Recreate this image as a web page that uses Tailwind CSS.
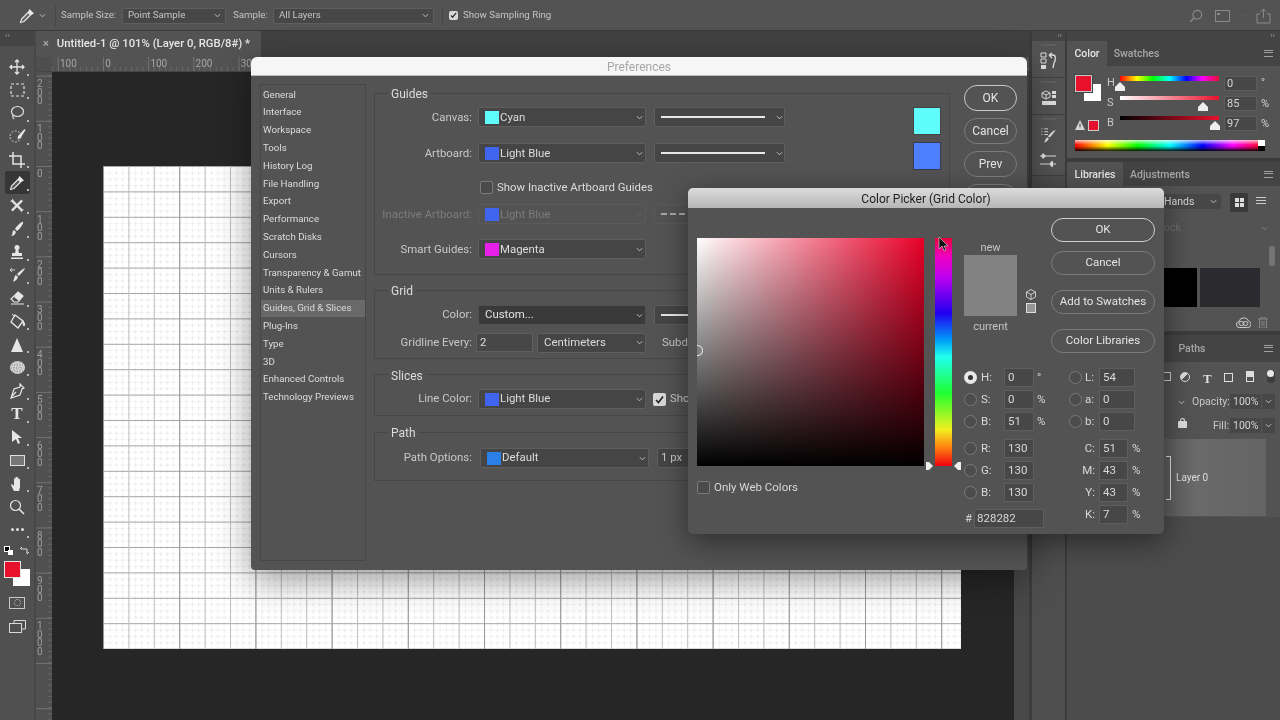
<!DOCTYPE html>
<html lang="en">
<head>
<meta charset="utf-8">
<title>Preferences</title>
<script src="https://cdn.jsdelivr.net/npm/@tailwindcss/browser@4"></script>
</head>
<body class="m-0 overflow-hidden bg-[#535353]">
<div class="relative w-[1280px] h-[720px] overflow-hidden flex flex-col bg-[#535353] text-[#d4d4d4] text-[11px] blur-[0.35px] font-[family-name:Roboto,sans-serif]">

  <!-- options bar -->
  <div class="h-[31px] shrink-0 flex items-center pt-[1px] bg-[#535353] border-b border-[#3a3a3a] text-[#c4c4c4] text-[9.7px]">
    <svg class="ml-[19px] w-[16px] h-[16px]" viewBox="0 0 16 16"><path d="M10.500 1l4.500 4.500-2 1-1.500 1.500-3.500-3.500 1.500-1.500z" fill="#e8e8e8"/><path d="M8.500 5L2.500 11 1.500 14.500 5 13.500l6-6" fill="#6a6a6a" stroke="#e8e8e8" stroke-width="1.100"/></svg>
    <svg class="ml-[4px] w-[7px] h-[5px]" viewBox="0 0 8 5"><path d="M1 1l3 3 3-3" stroke="#ccc" fill="none"/></svg>
    <div class="ml-[9px] w-px h-[20px] bg-[#464646]"></div>
    <span class="ml-[5px] w-[61px]">Sample Size:</span>
    <div class="w-[104px] h-[16px] flex items-center justify-between pl-[5px] pr-[4px] bg-[#474747] border border-[#5e5e5e] rounded-[2px]"><span>Point Sample</span><svg class="w-[7px] h-[5px]" viewBox="0 0 8 5"><path d="M1 1l3 3 3-3" stroke="#ccc" fill="none"/></svg></div>
    <span class="ml-[7px] w-[40px]">Sample:</span>
    <div class="w-[161px] h-[16px] flex items-center justify-between pl-[5px] pr-[4px] bg-[#474747] border border-[#5e5e5e] rounded-[2px]"><span>All Layers</span><svg class="w-[7px] h-[5px]" viewBox="0 0 8 5"><path d="M1 1l3 3 3-3" stroke="#ccc" fill="none"/></svg></div>
    <div class="ml-[8px] w-px h-[20px] bg-[#464646]"></div>
    <div class="ml-[6px] w-[9px] h-[9px] rounded-[2px] bg-[#d8d8d8] flex items-center justify-center"><svg class="w-[7px] h-[7px]" viewBox="0 0 8 8"><path d="M1 4l2 2 4-5" stroke="#333" stroke-width="1.500" fill="none"/></svg></div>
    <span class="ml-[5px]">Show Sampling Ring</span>
    <div class="ml-auto flex items-center">
      <svg class="w-[14px] h-[14px]" viewBox="0 0 16 16"><circle cx="9.500" cy="6.500" r="5" fill="none" stroke="#8a8a8a" stroke-width="1.300"/><path d="M6 10l-4.500 4.500" stroke="#8a8a8a" stroke-width="1.600"/></svg>
      <svg class="ml-[12px] w-[15px] h-[12px]" viewBox="0 0 15 12"><rect x=".5" y=".5" width="14" height="11" fill="none" stroke="#8a8a8a"/><rect x="2" y="3" width="3" height="2" fill="#8a8a8a"/></svg>
      <svg class="ml-[9px] w-[7px] h-[5px]" viewBox="0 0 8 5"><path d="M1 1l3 3 3-3" stroke="#646464" fill="none"/></svg>
      <svg class="ml-[10px] mr-[9px] w-[15px] h-[16px]" viewBox="0 0 15 16"><path d="M4 6H1v9h13V6h-3M7.500 10V1M4.500 4l3-3 3 3" fill="none" stroke="#8a8a8a"/></svg>
    </div>
  </div>

  <div class="flex-1 flex min-h-0">
    <!-- tools -->
    <div class="w-[34px] shrink-0 flex flex-col bg-[#505050]">
      <div class="h-[15px] shrink-0 bg-[#444] text-[8px] leading-[10px] pl-[5px] text-[#999]">››</div>
      <div class="h-[9.5px] shrink-0"></div>
      <div class="flex flex-col">
        <div class="relative h-[23.15px] flex items-center justify-center"><svg class="w-[16px] h-[16px]" viewBox="0 0 16 16"><path d="M8 1v14M1 8h14M6 3l2-2 2 2M6 13l2 2 2-2M3 6L1 8l2 2M13 6l2 2-2 2" fill="none" stroke="#e2e2e2" stroke-width="1.300"/></svg><i class="absolute left-[27px] bottom-[3px] w-[2px] h-[2px] bg-[#bbb]"></i></div>
        <div class="relative h-[23.15px] flex items-center justify-center"><svg class="w-[15px] h-[14px]" viewBox="0 0 15 14"><rect x="1" y="1" width="13" height="12" fill="none" stroke="#e2e2e2" stroke-width="1.200" stroke-dasharray="3 2"/></svg><i class="absolute left-[27px] bottom-[3px] w-[2px] h-[2px] bg-[#bbb]"></i></div>
        <div class="relative h-[23.15px] flex items-center justify-center"><svg class="w-[16px] h-[16px]" viewBox="0 0 16 16"><ellipse cx="8.500" cy="6.500" rx="6" ry="5" fill="none" stroke="#e2e2e2" stroke-width="1.200"/><path d="M4 10c-1 2 0 3 1 4" fill="none" stroke="#e2e2e2" stroke-width="1.200"/></svg><i class="absolute left-[27px] bottom-[3px] w-[2px] h-[2px] bg-[#bbb]"></i></div>
        <div class="relative h-[23.15px] flex items-center justify-center"><svg class="w-[17px] h-[16px]" viewBox="0 0 17 16"><circle cx="6.500" cy="8.500" r="5.500" fill="none" stroke="#d0d0d0" stroke-dasharray="2 1.500"/><path d="M15.500 1l1 1-5 8-3 1.500L9 8z" fill="#e8e8e8"/></svg><i class="absolute left-[27px] bottom-[3px] w-[2px] h-[2px] bg-[#bbb]"></i></div>
        <div class="relative h-[23.15px] flex items-center justify-center"><svg class="w-[16px] h-[16px]" viewBox="0 0 16 16"><path d="M4 0v12h12M0 4h12v12" fill="none" stroke="#e2e2e2" stroke-width="1.500"/></svg><i class="absolute left-[27px] bottom-[3px] w-[2px] h-[2px] bg-[#bbb]"></i></div>
        <div class="relative h-[23.15px] flex items-center justify-center"><div class="w-[25px] h-[23px] flex items-center justify-center rounded-[2px] bg-[#363636]"><svg class="w-[16px] h-[16px]" viewBox="0 0 16 16"><path d="M10.500 1l4.500 4.500-2 1-1.500 1.500-3.500-3.500 1.500-1.500z" fill="#e8e8e8"/><path d="M8.500 5L2.500 11 1.500 14.500 5 13.500l6-6" fill="#5a5a5a" stroke="#e8e8e8" stroke-width="1.100"/></svg></div><i class="absolute left-[27px] bottom-[3px] w-[2px] h-[2px] bg-[#bbb]"></i></div>
        <div class="relative h-[23.15px] flex items-center justify-center"><svg class="w-[16px] h-[15px]" viewBox="0 0 16 16"><path d="M2.500 2.500l11 11M13.500 2.500l-11 11" stroke="#e2e2e2" stroke-width="2.400"/><path d="M1 4l3-3M12 15l3-3" stroke="#e2e2e2"/></svg><i class="absolute left-[27px] bottom-[3px] w-[2px] h-[2px] bg-[#bbb]"></i></div>
        <div class="relative h-[23.15px] flex items-center justify-center"><svg class="w-[16px] h-[16px]" viewBox="0 0 16 16"><path d="M14 1c1 1-3 7-6 9l-2-2c2-3 7-8 8-7zM5 9l2 2c-1 3-3 4-5 4 2-1 1-5 3-6z" fill="#e6e6e6"/></svg><i class="absolute left-[27px] bottom-[3px] w-[2px] h-[2px] bg-[#bbb]"></i></div>
        <div class="relative h-[23.15px] flex items-center justify-center"><svg class="w-[16px] h-[16px]" viewBox="0 0 16 16"><circle cx="8" cy="3.500" r="2.500" fill="#e6e6e6"/><path d="M7 5h2l1 4h3v3H3V9h3zM2 13.500h12V15H2z" fill="#e6e6e6"/></svg><i class="absolute left-[27px] bottom-[3px] w-[2px] h-[2px] bg-[#bbb]"></i></div>
        <div class="relative h-[23.15px] flex items-center justify-center"><svg class="w-[17px] h-[16px]" viewBox="0 0 17 16"><path d="M16 1c0 1-4 6-6 8l-2-2c2-2 7-6 8-6zM7 8l2 2c-1 3-3 4-5 5 1-2 1-6 3-7z" fill="#e6e6e6"/><path d="M1 3h5M3 1L1 3l2 2" fill="none" stroke="#d0d0d0"/></svg><i class="absolute left-[27px] bottom-[3px] w-[2px] h-[2px] bg-[#bbb]"></i></div>
        <div class="relative h-[23.15px] flex items-center justify-center"><svg class="w-[16px] h-[16px]" viewBox="0 0 16 16"><path d="M9 2l5 4-5 6H5L2 9z" fill="none" stroke="#e6e6e6" stroke-width="1.200"/><path d="M9 2l5 4-4 5-5-4z" fill="#e6e6e6"/><path d="M2 14h13" stroke="#e6e6e6"/></svg><i class="absolute left-[27px] bottom-[3px] w-[2px] h-[2px] bg-[#bbb]"></i></div>
        <div class="relative h-[23.15px] flex items-center justify-center"><svg class="w-[17px] h-[17px]" viewBox="0 0 17 17"><path d="M6 2l8 6-5 7-7-6z" fill="none" stroke="#e6e6e6" stroke-width="1.300"/><path d="M14 8c2 2 2 5 1 5s-1-3-1-5zM3 1l3 3" stroke="#e6e6e6" fill="#e6e6e6"/></svg><i class="absolute left-[27px] bottom-[3px] w-[2px] h-[2px] bg-[#bbb]"></i></div>
        <div class="relative h-[23.15px] flex items-center justify-center"><svg class="w-[14px] h-[16px]" viewBox="0 0 14 16"><path d="M7 1l6 14H1z" fill="#e6e6e6"/></svg><i class="absolute left-[27px] bottom-[3px] w-[2px] h-[2px] bg-[#bbb]"></i></div>
        <div class="relative h-[23.15px] flex items-center justify-center"><svg class="w-[17px] h-[17px]" viewBox="0 0 17 17"><ellipse cx="8.500" cy="8.500" rx="7.500" ry="6.500" fill="#d4d4d4"/><path d="M3 6h11M2 9h13M3 12h11M5 3v11M8 2v13M11 3v11" stroke="#777" stroke-width=".7" stroke-dasharray="1 1.500"/></svg><i class="absolute left-[27px] bottom-[3px] w-[2px] h-[2px] bg-[#bbb]"></i></div>
        <div class="relative h-[23.15px] flex items-center justify-center"><svg class="w-[16px] h-[16px]" viewBox="0 0 16 16"><path d="M11 1l4 4-2 1-2 6-9 3 3-9 6-2zM2 14l5-5" fill="none" stroke="#e6e6e6" stroke-width="1.200"/></svg><i class="absolute left-[27px] bottom-[3px] w-[2px] h-[2px] bg-[#bbb]"></i></div>
        <div class="relative h-[23.15px] flex items-center justify-center font-[family-name:'Liberation_Serif',serif] font-bold text-[17px] text-[#e6e6e6]">T<i class="absolute left-[27px] bottom-[3px] w-[2px] h-[2px] bg-[#bbb]"></i></div>
        <div class="relative h-[23.15px] flex items-center justify-center"><svg class="w-[12px] h-[16px]" viewBox="0 0 12 16"><path d="M1 1l10 8H7l2 5-2 1-2-5-4 3z" fill="#e6e6e6"/></svg><i class="absolute left-[27px] bottom-[3px] w-[2px] h-[2px] bg-[#bbb]"></i></div>
        <div class="relative h-[23.15px] flex items-center justify-center"><div class="w-[15px] h-[11px] bg-[#777] border border-[#e0e0e0]"></div><i class="absolute left-[27px] bottom-[3px] w-[2px] h-[2px] bg-[#bbb]"></i></div>
        <div class="relative h-[23.15px] flex items-center justify-center"><svg class="w-[15px] h-[16px]" viewBox="0 0 15 16"><path d="M4 15L1 9c0-1 1-1 2 0l1 1V3c0-1 1.500-1 1.500 0v4V1.500c0-1 1.500-1 1.500 0V7V2c0-1 1.500-1 1.500 0v5V3.500c0-1 1.500-1 1.500 0V11l-1 4z" fill="#e6e6e6"/></svg><i class="absolute left-[27px] bottom-[3px] w-[2px] h-[2px] bg-[#bbb]"></i></div>
        <div class="relative h-[23.15px] flex items-center justify-center"><svg class="w-[16px] h-[16px]" viewBox="0 0 16 16"><circle cx="6.500" cy="6.500" r="5" fill="none" stroke="#e6e6e6" stroke-width="1.200"/><path d="M10 10l5 5" stroke="#e6e6e6" stroke-width="1.600"/></svg></div>
        <div class="relative h-[23.15px] flex items-center justify-center gap-[2px]"><div class="w-[3px] h-[3px] rounded-full bg-[#e0e0e0]"></div><div class="w-[3px] h-[3px] rounded-full bg-[#e0e0e0]"></div><div class="w-[3px] h-[3px] rounded-full bg-[#e0e0e0]"></div><i class="absolute left-[27px] bottom-[3px] w-[2px] h-[2px] bg-[#bbb]"></i></div>
      </div>
      <div class="ml-[4px] mt-[3.5px] h-[12px] flex items-center">
        <div class="relative w-[10px] h-[10px]"><div class="absolute left-0 top-0 w-[6px] h-[6px] bg-black border border-white"></div><div class="absolute left-[4px] top-[4px] w-[5px] h-[5px] bg-white"></div></div>
        <svg class="ml-[6px] w-[9px] h-[9px]" viewBox="0 0 9 9"><path d="M1 3h6v5M0 3l2-2M7 8l2-2" fill="none" stroke="#ddd"/></svg>
      </div>
      <div class="relative ml-[4px] mt-[4px] w-[26px] h-[26px]">
        <div class="absolute left-[9px] top-[8px] w-[17px] h-[17px] bg-white"></div>
        <div class="absolute left-0 top-0 w-[17px] h-[17px] bg-[#e8112d] border border-[#e4e4e4]"></div>
      </div>
      <div class="mt-[10px] ml-[9px] w-[16px] h-[12px] border border-[#c8c8c8] flex items-center justify-center"><div class="w-[7px] h-[7px] rounded-full border border-dotted border-[#bbb]"></div></div>
      <svg class="mt-[11px] ml-[9px] w-[17px] h-[13px]" viewBox="0 0 17 13"><path d="M5 3V.5h11.500V9H13" fill="none" stroke="#d8d8d8"/><rect x=".5" y="3.500" width="12" height="9" fill="none" stroke="#d8d8d8"/></svg>
    </div>

    <!-- document column -->
    <div class="w-[995px] shrink-0 flex flex-col border-l-2 border-[#474747]">
      <div class="h-[26px] shrink-0 flex bg-[#404040]">
        <div class="w-[225px] flex items-center pt-[1px] bg-[#535353] font-medium text-[#e6e6e6] text-[11.300px]">
          <span class="ml-[7px] text-[#aaa] text-[11px]">×</span>
          <span class="ml-[8px] whitespace-nowrap">Untitled-1 @ 101% (Layer 0, RGB/8#) *</span>
        </div>
      </div>
      <div class="h-[15px] shrink-0 flex bg-[#535353] text-[10px] leading-[14px] text-[#a6a6a6] border-b border-[#464646]">
        <div class="w-[16px] shrink-0 bg-[#4e4e4e]"></div>
        <div class="flex-1 pl-[6px] flex [background-image:linear-gradient(to_right,#727272_1px,transparent_1px),linear-gradient(to_right,#686868_1px,transparent_1px)] [background-size:45.2px_100%,5.65px_4px] [background-position:5.8px_0,5.8px_bottom] [background-repeat:repeat,repeat-x]">
          <span class="w-[45.2px] pl-[2px]">100</span><span class="w-[45.2px] pl-[2px]">0</span><span class="w-[45.2px] pl-[2px]">100</span><span class="w-[45.2px] pl-[2px]">200</span><span class="w-[45.2px] pl-[2px]">30</span>
        </div>
      </div>
      <div class="flex-1 flex min-h-0">
        <div class="w-[16px] shrink-0 flex flex-col pl-[1px] bg-[#505050] text-[10px] leading-[8.5px] text-[#9c9c9c] pt-[8px] [background-image:linear-gradient(#727272_1px,transparent_1px),linear-gradient(#666666_1px,transparent_1px)] [background-size:100%_45.2px,4px_5.65px] [background-position:0_3.6px,right_3.6px] [background-repeat:repeat,repeat-y]">
          <div class="h-[45.2px] shrink-0 w-[7px] break-all">200</div>
          <div class="h-[45.2px] shrink-0 w-[7px] break-all">100</div>
          <div class="h-[45.2px] shrink-0 w-[7px] break-all">0</div>
          <div class="h-[45.2px] shrink-0 w-[7px] break-all">100</div>
          <div class="h-[45.2px] shrink-0 w-[7px] break-all">200</div>
          <div class="h-[45.2px] shrink-0 w-[7px] break-all">300</div>
          <div class="h-[45.2px] shrink-0 w-[7px] break-all">400</div>
          <div class="h-[45.2px] shrink-0 w-[7px] break-all">500</div>
          <div class="h-[45.2px] shrink-0 w-[7px] break-all">600</div>
          <div class="h-[45.2px] shrink-0 w-[7px] break-all">700</div>
          <div class="h-[45.2px] shrink-0 w-[7px] break-all">800</div>
          <div class="h-[45.2px] shrink-0 w-[7px] break-all">900</div>
          <div class="h-[45.2px] shrink-0 w-[7px] break-all">1000</div>
        </div>
        <div class="w-[962px] shrink-0 bg-[#262626] pl-[51px] pt-[94px] overflow-hidden">
          <svg class="block" width="858" height="483" viewBox="0 0 858 483">
            <defs>
              <pattern id="minor" width="6.35" height="6.35" patternUnits="userSpaceOnUse">
                <path d="M0 .5h6.350" stroke="#ececec" stroke-dasharray="3 2"/>
                <path d="M.5 0v6.350" stroke="#ececec" stroke-dasharray="3 2"/>
              </pattern>
              <pattern id="major" width="25.4" height="25.4" patternUnits="userSpaceOnUse">
                <path d="M0 .5h25.400" stroke="#a6a6a6"/>
                <path d="M.5 0v25.400" stroke="#c0c0c0"/>
              </pattern>
              <pattern id="heavy" width="76.2" height="76.2" patternUnits="userSpaceOnUse">
                <path d="M.5 0v76.200" stroke="#9a9a9a"/>
              </pattern>
            </defs>
            <rect width="858" height="483" fill="#fff"/>
            <rect width="858" height="483" fill="url(#minor)"/>
            <rect width="858" height="483" fill="url(#major)"/>
            <rect width="858" height="483" fill="url(#heavy)"/>
          </svg>
        </div>
        <div class="flex-1 bg-[#484848]"></div>
      </div>
    </div>

    <div class="w-[3px] shrink-0 bg-[#3c3c3c]"></div>

    <!-- dock -->
    <div class="w-[33px] shrink-0 flex flex-col bg-[#4e4e4e]">
      <div class="h-[10px] shrink-0 bg-[#444] text-[8px] leading-[9px] text-right pr-[3px] text-[#999]">‹‹</div>
      <div class="relative h-[37px] shrink-0 flex items-center justify-center pt-[4px] bg-[#535353] border-b border-[#3f3f3f]"><i class="absolute top-[3px] left-[9px] w-[15px] h-[2px] bg-[#5e5e5e]"></i><svg class="w-[17px] h-[18px]" viewBox="0 0 17 18"><path d="M1 1h5v4H1zM1 7h5v4H1z" fill="none" stroke="#ddd"/><rect x="1" y="13" width="5" height="4" fill="#ddd"/><path d="M9 3h4c3 0 3 5 1 8l-1 5M9 3l3-2M9 3l3 3" fill="none" stroke="#ddd" stroke-width="1.300"/></svg></div>
      <div class="relative h-[37px] shrink-0 flex items-center justify-center pt-[4px] bg-[#535353] border-b border-[#3f3f3f]"><i class="absolute top-[3px] left-[9px] w-[15px] h-[2px] bg-[#5e5e5e]"></i><svg class="w-[16px] h-[16px]" viewBox="0 0 16 16"><path d="M5 1l4 2v4L5 9 1 7V3zM1 3l4 2 4-2M5 5v4" fill="none" stroke="#ddd"/><path d="M11 1h4v3h-4zM11 5h4v3h-4z" fill="#ddd"/><rect x="1" y="11" width="14" height="4" fill="#ddd"/></svg></div>
      <div class="relative h-[61px] shrink-0 flex flex-col items-center justify-center gap-[9px] pt-[5px] bg-[#535353] border-b border-[#3f3f3f]"><i class="absolute top-[3px] left-[9px] w-[15px] h-[2px] bg-[#5e5e5e]"></i>
        <svg class="w-[17px] h-[17px]" viewBox="0 0 17 18"><path d="M1 2h1M4 2h4M1 5h1M4 5h4M1 8h1M4 8h4" stroke="#ddd"/><path d="M16 3c0 1-4 6-6 8l-2-1c2-3 7-7 8-7zM7 11l2 1c-1 3-3 4-6 5 2-1 2-5 4-6z" fill="#ddd"/></svg>
        <svg class="w-[17px] h-[15px]" viewBox="0 0 17 15"><path d="M0 3h16M0 11h16" stroke="#ddd"/><path d="M3 0l3 3-3 3-2-3zM13 8a3 3 0 1 0 0 6z" fill="#ddd"/></svg>
      </div>
      <div class="flex-1 border-l border-[#505050]"></div>
    </div>
    <div class="w-[2px] shrink-0 bg-[#3c3c3c]"></div>

    <!-- panels -->
    <div class="w-[213px] shrink-0 flex flex-col bg-[#4c4c4c]">
      <div class="h-[10px] shrink-0 bg-[#444] text-[8px] leading-[9px] text-right pr-[5px] text-[#999]">››</div>
      <!-- color panel -->
      <div class="h-[25px] shrink-0 flex items-center bg-[#444] font-medium text-[10.5px]">
        <div class="w-[40px] h-full flex items-center justify-center pt-[1px] bg-[#535353] text-[#e6e6e6]">Color</div>
        <div class="w-[59px] h-full flex items-center justify-center pt-[1px] text-[#a8a8a8]">Swatches</div>
        <div class="ml-auto mr-[7px] w-[9px] h-[7px] border-y border-[#a0a0a0] bg-[linear-gradient(#444_0,#444_1px,#a0a0a0_1px,#a0a0a0_2px,#444_2px)]"></div>
      </div>
      <div class="relative h-[92px] shrink-0 bg-[#535353]">
        <div class="absolute left-[17px] top-[18px] w-[17px] h-[17px] bg-white"></div>
        <div class="absolute left-[8px] top-[9px] w-[17px] h-[17px] bg-[#e8112d] border border-[#c9c9c9] outline outline-[#444]"></div>
        <svg class="absolute left-[8px] top-[54px] w-[10px] h-[10px]" viewBox="0 0 11 11"><path d="M5.500 0L11 11H0z" fill="#d6d6d6"/><path d="M5.500 4v4" stroke="#333"/></svg>
        <div class="absolute left-[21px] top-[54px] w-[11px] h-[11px] bg-[#e8112d] border border-[#ccc]"></div>
        <span class="absolute left-[40px] top-[9px] text-[#c8c8c8]">H</span>
        <span class="absolute left-[40px] top-[29px] text-[#c8c8c8]">S</span>
        <span class="absolute left-[40px] top-[49px] text-[#c8c8c8]">B</span>
        <div class="absolute left-[53px] top-[10px] w-[99px] h-[5px] bg-[linear-gradient(to_right,#f00,#ff0_17%,#0f0_33%,#0ff_50%,#00f_67%,#f0f_83%,#e8112d)]"></div>
        <div class="absolute left-[53px] top-[30px] w-[99px] h-[4px] bg-[linear-gradient(to_right,#fff,#e8112d)]"></div>
        <div class="absolute left-[53px] top-[50px] w-[99px] h-[4px] bg-[linear-gradient(to_right,#000,#e8112d)]"></div>
        <svg class="absolute left-[48px] top-[16px] w-[10px] h-[9px]" viewBox="0 0 10 9"><path d="M5 0l5 5v4H0V5z" fill="#eee"/></svg>
        <svg class="absolute left-[131px] top-[36px] w-[10px] h-[9px]" viewBox="0 0 10 9"><path d="M5 0l5 5v4H0V5z" fill="#eee"/></svg>
        <svg class="absolute left-[143px] top-[55px] w-[10px] h-[9px]" viewBox="0 0 10 9"><path d="M5 0l5 5v4H0V5z" fill="#eee"/></svg>
        <div class="absolute left-[157px] top-[10px] w-[33px] h-[15px] bg-[#474747] border border-[#5c5c5c] pl-[2px] leading-[13px]">0</div>
        <div class="absolute left-[157px] top-[30px] w-[33px] h-[15px] bg-[#474747] border border-[#5c5c5c] pl-[2px] leading-[13px]">85</div>
        <div class="absolute left-[157px] top-[50px] w-[33px] h-[15px] bg-[#474747] border border-[#5c5c5c] pl-[2px] leading-[13px]">97</div>
        <span class="absolute left-[194px] top-[9px]">°</span>
        <span class="absolute left-[194px] top-[30px]">%</span>
        <span class="absolute left-[194px] top-[50px]">%</span>
        <div class="absolute left-[8px] top-[74px] w-[190px] h-[11px] bg-[linear-gradient(to_bottom,rgba(255,255,255,.75),rgba(255,255,255,0)_45%,rgba(0,0,0,0)_55%,rgba(0,0,0,.9)),linear-gradient(to_right,#f00,#ff0_17%,#0f0_33%,#0ff_50%,#00f_67%,#f0f_83%,#f00)]"></div>
        <div class="absolute left-[191px] top-[74px] w-[7px] h-[6px] bg-white"></div>
        <div class="absolute left-[191px] top-[80px] w-[7px] h-[5px] bg-black"></div>
      </div>
      <div class="h-[4px] shrink-0 bg-[#3c3c3c]"></div>
      <!-- libraries -->
      <div class="h-[24px] shrink-0 flex items-center bg-[#444] font-medium text-[10.5px]">
        <div class="w-[56px] h-full flex items-center justify-center pt-[1px] bg-[#535353] text-[#e6e6e6]">Libraries</div>
        <div class="w-[74px] h-full flex items-center justify-center pt-[1px] text-[#a8a8a8]">Adjustments</div>
        <div class="ml-auto mr-[7px] w-[9px] h-[7px] border-y border-[#a0a0a0] bg-[linear-gradient(#444_0,#444_1px,#a0a0a0_1px,#a0a0a0_2px,#444_2px)]"></div>
      </div>
      <div class="relative h-[145px] shrink-0 bg-[#535353]">
        <div class="absolute left-[97px] top-[8px] w-[57px] h-[15px] flex items-center justify-between pr-[4px] bg-[#474747] rounded-[2px] text-[10.5px]"><span>Hands</span><svg class="w-[7px] h-[5px]" viewBox="0 0 8 5"><path d="M1 1l3 3 3-3" stroke="#ccc" fill="none"/></svg></div>
        <div class="absolute left-[163px] top-[7px] w-[18px] h-[19px] bg-[#3a3a3a] rounded-[2px] flex items-center justify-center"><div class="grid grid-cols-2 gap-px"><div class="w-[4px] h-[4px] bg-[#ddd]"></div><div class="w-[4px] h-[4px] bg-[#ddd]"></div><div class="w-[4px] h-[4px] bg-[#ddd]"></div><div class="w-[4px] h-[4px] bg-[#ddd]"></div></div></div>
        <div class="absolute left-[189px] top-[11px] w-[10px] h-[9px] bg-[repeating-linear-gradient(#ccc_0,#ccc_1.5px,transparent_1.5px,transparent_3px)]"></div>
        <span class="absolute left-[97px] top-[34px] text-[#6e6e6e] text-[10.5px]">ock</span>
        <svg class="absolute left-[194px] top-[40px] w-[7px] h-[5px]" viewBox="0 0 8 5"><path d="M1 1l3 3 3-3" stroke="#888" fill="none"/></svg>
        <div class="absolute left-[202px] top-[60px] w-[6px] h-[20px] rounded-[3px] bg-[#757575]"></div>
        <div class="absolute left-[97px] top-[82px] w-[33px] h-[39px] bg-black"></div>
        <div class="absolute left-[133px] top-[82px] w-[60px] h-[39px] bg-[#2b2a2e]"></div>
        <svg class="absolute left-[169px] top-[131px] w-[15px] h-[11px]" viewBox="0 0 15 11"><path d="M4 10.500a3 3 0 0 1-1-6 5 5 0 0 1 9.500-.5 3.300 3.300 0 0 1-1 6.500z" fill="none" stroke="#ccc"/><ellipse cx="5.500" cy="6.500" rx="2.500" ry="2" fill="none" stroke="#ccc"/><ellipse cx="9.500" cy="6.500" rx="2.500" ry="2" fill="none" stroke="#ccc"/></svg>
        <svg class="absolute left-[191px] top-[131px] w-[10px] h-[11px]" viewBox="0 0 10 11"><path d="M0 2h10M3 2V0h4v2M1.500 2v9h7V2M4 4v5M6 4v5" fill="none" stroke="#888"/></svg>
      </div>
      <div class="h-[4px] shrink-0 bg-[#3c3c3c]"></div>
      <!-- layers -->
      <div class="h-[27px] shrink-0 flex items-center bg-[#444] font-medium text-[10.5px]">
        <div class="ml-[100px] w-[50px] h-full flex items-center justify-center pt-[1px] text-[#a8a8a8]">Paths</div>
        <div class="ml-auto mr-[7px] w-[9px] h-[7px] border-y border-[#a0a0a0] bg-[linear-gradient(#444_0,#444_1px,#a0a0a0_1px,#a0a0a0_2px,#444_2px)]"></div>
      </div>
      <div class="relative h-[155px] shrink-0 bg-[#535353]">
        <div class="absolute left-[96px] top-[10px] w-[8px] h-[9px] border border-[#ccc]"></div>
        <div class="absolute left-[113px] top-[10px] w-[10px] h-[10px] rounded-full border border-[#ddd] bg-[linear-gradient(135deg,#ddd_50%,transparent_50%)]"></div>
        <span class="absolute left-[136px] top-[7px] font-[family-name:'Liberation_Serif',serif] font-bold text-[13px] text-[#ddd]">T</span>
        <div class="absolute left-[157px] top-[11px] w-[9px] h-[9px] border border-[#ddd] outline outline-[#ddd] outline-offset-[-1px]"></div>
        <div class="absolute left-[179px] top-[9px] w-[8px] h-[11px] border border-[#ddd] bg-[linear-gradient(#ddd_50%,transparent_50%)]"></div>
        <div class="absolute left-[200px] top-[8px] w-[8px] h-[13px] rounded-[4px] bg-[#3e3e3e]"><div class="w-[7px] h-[7px] rounded-full bg-[#e8e8e8]"></div></div>
        <svg class="absolute left-[111px] top-[38px] w-[7px] h-[5px]" viewBox="0 0 8 5"><path d="M1 1l3 3 3-3" stroke="#ccc" fill="none"/></svg>
        <span class="absolute left-[125px] top-[32px] text-[10.500px] text-[#c8c8c8]">Opacity:</span>
        <div class="absolute left-[163px] top-[32px] w-[31px] h-[15px] bg-[#474747] text-[10.500px] leading-[15px] pl-[3px]">100%</div>
        <div class="absolute left-[195px] top-[32px] w-[13px] h-[15px] bg-[#474747] flex items-center justify-center"><svg class="w-[7px] h-[5px]" viewBox="0 0 8 5"><path d="M1 1l3 3 3-3" stroke="#ccc" fill="none"/></svg></div>
        <div class="absolute left-[111px] top-[59px] w-[9px] h-[7px] rounded-[1px] bg-[#ddd] before:absolute before:left-[2px] before:-top-[3px] before:w-[5px] before:h-[4px] before:border before:border-b-0 before:border-[#ddd] before:rounded-t-[3px]"></div>
        <span class="absolute left-[146px] top-[56px] text-[10.500px] text-[#c8c8c8]">Fill:</span>
        <div class="absolute left-[163px] top-[56px] w-[31px] h-[15px] bg-[#474747] text-[10.500px] leading-[15px] pl-[3px]">100%</div>
        <div class="absolute left-[195px] top-[56px] w-[13px] h-[15px] bg-[#474747] flex items-center justify-center"><svg class="w-[7px] h-[5px]" viewBox="0 0 8 5"><path d="M1 1l3 3 3-3" stroke="#ccc" fill="none"/></svg></div>
        <div class="absolute left-[90px] top-[77px] w-[109px] h-[77px] bg-[linear-gradient(to_right,#5a5a5a,#6a6a6a_35%,#646464)] flex items-center">
          <div class="ml-[9px] w-[5px] h-[44px] border border-l-0 border-[#ddd]"></div>
          <span class="ml-[5px] text-[10px] text-[#dcdcdc]">Layer 0</span>
        </div>
      </div>
      <div class="flex-1 bg-[#4c4c4c]"></div>
    </div>
  </div>

  <!-- Preferences dialog -->
  <div class="absolute left-[251px] top-[57px] w-[776px] h-[513px] flex flex-col rounded-t-[6px] rounded-b-[4px] bg-[#535353] shadow-[0_10px_35px_rgba(0,0,0,0.4)]">
    <div class="h-[19px] shrink-0 pt-[2px] rounded-t-[6px] bg-[#f6f6f6] border-b border-[#bcbcbc] flex items-center justify-center text-[12px] text-[#a6a6a6]">Preferences</div>
    <div class="flex-1 flex min-h-0">
      <div class="ml-[9px] mt-[8px] w-[106px] h-[477px] shrink-0 flex flex-col border border-[#474747] pt-[1px] text-[9.700px] text-[#dcdcdc]">
        <div class="h-[17.8px] shrink-0 pl-[2px] flex items-center">General</div>
        <div class="h-[17.8px] shrink-0 pl-[2px] flex items-center">Interface</div>
        <div class="h-[17.8px] shrink-0 pl-[2px] flex items-center">Workspace</div>
        <div class="h-[17.8px] shrink-0 pl-[2px] flex items-center">Tools</div>
        <div class="h-[17.8px] shrink-0 pl-[2px] flex items-center">History Log</div>
        <div class="h-[17.8px] shrink-0 pl-[2px] flex items-center">File Handling</div>
        <div class="h-[17.8px] shrink-0 pl-[2px] flex items-center">Export</div>
        <div class="h-[17.8px] shrink-0 pl-[2px] flex items-center">Performance</div>
        <div class="h-[17.8px] shrink-0 pl-[2px] flex items-center">Scratch Disks</div>
        <div class="h-[17.8px] shrink-0 pl-[2px] flex items-center">Cursors</div>
        <div class="h-[17.8px] shrink-0 pl-[2px] flex items-center whitespace-nowrap">Transparency &amp; Gamut</div>
        <div class="h-[17.8px] shrink-0 pl-[2px] flex items-center">Units &amp; Rulers</div>
        <div class="h-[17.8px] shrink-0 pl-[2px] flex items-center bg-[#696969]">Guides, Grid &amp; Slices</div>
        <div class="h-[17.8px] shrink-0 pl-[2px] flex items-center">Plug-Ins</div>
        <div class="h-[17.8px] shrink-0 pl-[2px] flex items-center">Type</div>
        <div class="h-[17.8px] shrink-0 pl-[2px] flex items-center">3D</div>
        <div class="h-[17.8px] shrink-0 pl-[2px] flex items-center">Enhanced Controls</div>
        <div class="h-[17.8px] shrink-0 pl-[2px] flex items-center">Technology Previews</div>
      </div>

      <div class="ml-[8px] w-[576px] shrink-0 flex flex-col pt-[17px] text-[11.4px] text-[#c8c8c8]">
        <!-- Guides -->
        <div class="relative h-[182px] shrink-0 flex justify-between border border-[#474747] pr-[8px]">
          <span class="absolute left-[13px] -top-[7px] px-[3px] bg-[#535353] text-[#dcdcdc] text-[12px] leading-[14px]">Guides</span>
          <div class="flex flex-col pt-[13px]">
            <div class="flex items-center h-[20px]">
              <span class="w-[97px] text-right pt-[1px]">Canvas:</span>
              <div class="ml-[6px] w-[168px] h-[20px] flex items-center bg-[#454545] border border-[#5e5e5e] rounded-[2px] pl-[6px] pr-[2px]"><div class="w-[14px] h-[13px] bg-[#5ffcfc]"></div><span class="ml-[1px] flex-1 pt-[1px] text-[#dcdcdc]">Cyan</span><svg class="w-[7px] h-[5px]" viewBox="0 0 8 5"><path d="M1 1l3 3 3-3" stroke="#ccc" fill="none"/></svg></div>
              <div class="ml-[8px] w-[131px] h-[20px] flex items-center bg-[#454545] border border-[#5e5e5e] rounded-[2px] pl-[6px] pr-[1px]"><div class="w-[104px] h-[2px] bg-[#e8e8e8]"></div><svg class="ml-auto w-[7px] h-[5px]" viewBox="0 0 8 5"><path d="M1 1l3 3 3-3" stroke="#ccc" fill="none"/></svg></div>
            </div>
            <div class="mt-[16px] flex items-center h-[20px]">
              <span class="w-[97px] text-right pt-[1px]">Artboard:</span>
              <div class="ml-[6px] w-[168px] h-[20px] flex items-center bg-[#454545] border border-[#5e5e5e] rounded-[2px] pl-[6px] pr-[2px]"><div class="w-[14px] h-[13px] bg-[#3f64ee]"></div><span class="ml-[1px] flex-1 pt-[1px] text-[#dcdcdc]">Light Blue</span><svg class="w-[7px] h-[5px]" viewBox="0 0 8 5"><path d="M1 1l3 3 3-3" stroke="#ccc" fill="none"/></svg></div>
              <div class="ml-[8px] w-[131px] h-[20px] flex items-center bg-[#454545] border border-[#5e5e5e] rounded-[2px] pl-[6px] pr-[1px]"><div class="w-[104px] h-[2px] bg-[#e8e8e8]"></div><svg class="ml-auto w-[7px] h-[5px]" viewBox="0 0 8 5"><path d="M1 1l3 3 3-3" stroke="#ccc" fill="none"/></svg></div>
            </div>
            <div class="mt-[17px] ml-[105px] flex items-center h-[14px]">
              <div class="w-[13px] h-[13px] rounded-[2px] bg-[#4a4a4a] border border-[#7a7a7a]"></div>
              <span class="ml-[4px] pt-[1px] text-[#dcdcdc]">Show Inactive Artboard Guides</span>
            </div>
            <div class="mt-[10px] flex items-center h-[20px] text-[#7c7c7c]">
              <span class="w-[97px] text-right whitespace-nowrap pt-[1px]">Inactive Artboard:</span>
              <div class="ml-[6px] w-[168px] h-[20px] flex items-center border border-[#5a5a5a] rounded-[2px] pl-[6px] pr-[2px]"><div class="w-[14px] h-[13px] bg-[#3f64ee]"></div><span class="ml-[1px] flex-1 pt-[1px]">Light Blue</span><svg class="w-[7px] h-[5px]" viewBox="0 0 8 5"><path d="M1 1l3 3 3-3" stroke="#666" fill="none"/></svg></div>
              <div class="ml-[8px] w-[131px] h-[20px] flex items-center border border-[#5a5a5a] rounded-[2px] pl-[6px] pr-[3px]"><div class="w-[104px] h-[2px] bg-[repeating-linear-gradient(to_right,#a8a8a8_0,#a8a8a8_6px,transparent_6px,transparent_9px)]"></div></div>
            </div>
            <div class="mt-[15px] flex items-center h-[20px]">
              <span class="w-[97px] text-right pt-[1px]">Smart Guides:</span>
              <div class="ml-[6px] w-[168px] h-[20px] flex items-center bg-[#454545] border border-[#5e5e5e] rounded-[2px] pl-[6px] pr-[2px]"><div class="w-[14px] h-[13px] bg-[#e81fe8]"></div><span class="ml-[1px] flex-1 pt-[1px] text-[#dcdcdc]">Magenta</span><svg class="w-[7px] h-[5px]" viewBox="0 0 8 5"><path d="M1 1l3 3 3-3" stroke="#ccc" fill="none"/></svg></div>
            </div>
          </div>
          <div class="flex flex-col gap-[7px] pt-[13px]">
            <div class="w-[28px] h-[28px] bg-[#5ffcfc] border border-[#444]"></div>
            <div class="w-[28px] h-[28px] bg-[#4d7fff] border border-[#3a3a55]"></div>
          </div>
        </div>
        <!-- Grid -->
        <div class="relative mt-[15px] h-[69px] shrink-0 border border-[#474747] pt-[14px]">
          <span class="absolute left-[13px] -top-[7px] px-[3px] bg-[#535353] text-[#dcdcdc] text-[12px] leading-[14px]">Grid</span>
          <div class="flex items-center h-[20px]">
            <span class="w-[97px] text-right">Color:</span>
            <div class="ml-[6px] w-[168px] h-[20px] flex items-center bg-[#3a3a3a] border border-[#505050] rounded-[2px] pl-[6px] pr-[2px]"><span class="flex-1 text-[#e4e4e4]">Custom...</span><svg class="w-[7px] h-[5px]" viewBox="0 0 8 5"><path d="M1 1l3 3 3-3" stroke="#ccc" fill="none"/></svg></div>
            <div class="ml-[8px] w-[131px] h-[20px] flex items-center bg-[#454545] border border-[#5e5e5e] rounded-[2px] pl-[6px] pr-[3px]"><div class="w-[104px] h-[2px] bg-[#e8e8e8]"></div></div>
          </div>
          <div class="mt-[8px] flex items-center h-[19px]">
            <span class="w-[97px] text-right whitespace-nowrap">Gridline Every:</span>
            <div class="ml-[4px] w-[57px] h-[19px] flex items-center bg-[#474747] border border-[#5e5e5e] pl-[3px] text-[#dcdcdc]">2</div>
            <div class="ml-[4px] w-[109px] h-[20px] flex items-center bg-[#454545] border border-[#5e5e5e] rounded-[2px] pl-[6px] pr-[2px]"><span class="flex-1 text-[#dcdcdc]">Centimeters</span><svg class="w-[7px] h-[5px]" viewBox="0 0 8 5"><path d="M1 1l3 3 3-3" stroke="#ccc" fill="none"/></svg></div>
            <span class="ml-[16px]">Subd</span>
          </div>
        </div>
        <!-- Slices -->
        <div class="relative mt-[15px] h-[42px] shrink-0 border border-[#474747] pt-[14px]">
          <span class="absolute left-[13px] -top-[6px] px-[3px] bg-[#535353] text-[#dcdcdc] text-[12px] leading-[14px]">Slices</span>
          <div class="flex items-center h-[20px]">
            <span class="w-[97px] text-right">Line Color:</span>
            <div class="ml-[6px] w-[168px] h-[20px] flex items-center bg-[#454545] border border-[#5e5e5e] rounded-[2px] pl-[6px] pr-[2px]"><div class="w-[14px] h-[13px] bg-[#3f64ee]"></div><span class="ml-[1px] flex-1 text-[#dcdcdc]">Light Blue</span><svg class="w-[7px] h-[5px]" viewBox="0 0 8 5"><path d="M1 1l3 3 3-3" stroke="#ccc" fill="none"/></svg></div>
            <div class="ml-[7px] w-[13px] h-[13px] rounded-[2px] bg-[#d8d8d8] flex items-center justify-center"><svg class="w-[9px] h-[9px]" viewBox="0 0 9 9"><path d="M1 5l2.500 2.500L8 1.500" stroke="#222" stroke-width="1.600" fill="none"/></svg></div>
            <span class="ml-[4px]">Sho</span>
          </div>
        </div>
        <!-- Path -->
        <div class="relative mt-[16px] h-[49px] shrink-0 border border-[#474747] pt-[15px]">
          <span class="absolute left-[13px] -top-[7px] px-[3px] bg-[#535353] text-[#dcdcdc] text-[12px] leading-[14px]">Path</span>
          <div class="flex items-center h-[20px]">
            <span class="w-[97px] text-right">Path Options:</span>
            <div class="ml-[8px] w-[169px] h-[20px] flex items-center bg-[#454545] border border-[#5e5e5e] rounded-[2px] pl-[6px] pr-[2px]"><div class="w-[14px] h-[13px] bg-[#2b80e8]"></div><span class="ml-[1px] flex-1 text-[#dcdcdc]">Default</span><svg class="w-[7px] h-[5px]" viewBox="0 0 8 5"><path d="M1 1l3 3 3-3" stroke="#ccc" fill="none"/></svg></div>
            <div class="ml-[8px] w-[60px] h-[20px] flex items-center bg-[#454545] border border-[#5e5e5e] rounded-[2px] pl-[3px]">1 px</div>
          </div>
        </div>
      </div>

      <div class="ml-[14px] w-[53px] shrink-0 flex flex-col gap-[7px] pt-[9px] text-[12px] text-[#e4e4e4]">
        <div class="h-[26px] flex items-center justify-center rounded-full border border-[#c8c8c8]">OK</div>
        <div class="h-[26px] flex items-center justify-center rounded-full border border-[#7c7c7c]">Cancel</div>
        <div class="h-[26px] flex items-center justify-center rounded-full border border-[#7c7c7c]">Prev</div>
        <div class="h-[26px] rounded-full border border-[#7c7c7c]"></div>
      </div>
    </div>
  </div>

  <!-- Color Picker dialog -->
  <div class="absolute left-[688px] top-[188px] w-[476px] h-[346px] flex flex-col rounded-[5px] bg-[#535353] shadow-[0_8px_30px_rgba(0,0,0,0.45)]">
    <div class="h-[20px] shrink-0 pt-[1px] rounded-t-[5px] bg-[linear-gradient(#dcdcdc,#b6b6b6)] flex items-center justify-center text-[12px] text-[#1e1e1e]">Color Picker (Grid Color)</div>
    <div class="flex-1 flex min-h-0 text-[11.500px] text-[#d8d8d8]">
      <!-- field + hue -->
      <div class="w-[276px] shrink-0 flex flex-col pl-[9px] pt-[30px]">
        <div class="flex">
          <div class="relative w-[227px] h-[228px] bg-[linear-gradient(to_bottom,rgba(0,0,0,0),#000),linear-gradient(to_right,#fff,#ea0028)]">
            <div class="absolute -left-[0px] top-[107px] w-[6px] h-[11px] rounded-r-full border border-l-0 border-[#e4e4e4]"></div>
          </div>
          <div class="relative ml-[11px] w-[17px] h-[228px] bg-[linear-gradient(to_bottom,#e8003a,#f000c0_8%,#c000f0_17%,#2000f0_33%,#00a0f8_45%,#20fff0_52%,#20ff30_68%,#f0f020_84%,#ff8010_92%,#f00010)]">
            <svg class="absolute -left-[9px] top-[224px] w-[7px] h-[8px]" viewBox="0 0 7 8"><path d="M0 0h3l4 4-4 4H0z" fill="#eee"/></svg>
            <svg class="absolute -right-[9px] top-[224px] w-[7px] h-[8px]" viewBox="0 0 7 8"><path d="M7 0H4L0 4l4 4h3z" fill="#eee"/></svg>
            <svg class="absolute left-[3px] -top-[1px] w-[10px] h-[15px]" viewBox="0 0 10 15"><path d="M1 0v12l3-3 2 5 2-1-2-4h4z" fill="#111" stroke="#ccc" stroke-width=".7"/></svg>
          </div>
        </div>
        <div class="mt-[13px] flex items-center">
          <div class="w-[13px] h-[13px] rounded-[2px] bg-[#4a4a4a] border border-[#7a7a7a]"></div>
          <span class="ml-[4px]">Only Web Colors</span>
        </div>
      </div>
      <!-- values -->
      <div class="w-[191px] shrink-0 flex flex-col">
        <div class="h-[160px] shrink-0 flex">
          <div class="w-[53px] shrink-0 flex flex-col items-center pt-[33px] text-[#c4c4c4] text-[11px]">
            <span class="h-[14px] leading-[14px]">new</span>
            <div class="w-[53px] h-[61px] bg-[#828282]"></div>
            <span class="mt-[3px]">current</span>
          </div>
          <div class="ml-[9px] w-[10px] shrink-0 flex flex-col items-center pt-[81px]">
            <svg class="w-[10px] h-[11px]" viewBox="0 0 10 11"><path d="M5 .5l4.500 2.500v5L5 10.500.5 8V3zM.5 3L5 5.500 9.500 3M5 5.500v5" fill="none" stroke="#ccc"/></svg>
            <div class="mt-[3px] w-[10px] h-[10px] bg-[#969696] border border-[#dcdcdc]"></div>
          </div>
          <div class="ml-[15px] w-[104px] shrink-0 flex flex-col pt-[10px] text-[#e4e4e4] text-[11.500px]">
            <div class="h-[24px] flex items-center justify-center rounded-full border border-[#d0d0d0]">OK</div>
            <div class="mt-[9px] h-[24px] flex items-center justify-center rounded-full border border-[#7c7c7c]">Cancel</div>
            <div class="mt-[15px] h-[24px] flex items-center justify-center rounded-full border border-[#7c7c7c]">Add to Swatches</div>
            <div class="mt-[15px] h-[24px] flex items-center justify-center rounded-full border border-[#7c7c7c]">Color Libraries</div>
          </div>
        </div>
        <div class="flex">
          <div class="w-[105px] shrink-0 flex flex-col">
            <div class="h-[19px] flex items-center"><div class="w-[13px] h-[13px] rounded-full bg-[#e8e8e8] flex items-center justify-center"><div class="w-[5px] h-[5px] rounded-full bg-[#333]"></div></div><span class="ml-[4px] w-[23px]">H:</span><div class="w-[30px] h-[19px] bg-[#474747] border border-[#5e5e5e] pl-[3px] leading-[17px]">0</div><span class="ml-[3px]">°</span></div>
            <div class="mt-[3px] h-[19px] flex items-center"><div class="w-[13px] h-[13px] rounded-full border border-[#7a7a7a] bg-[#4c4c4c]"></div><span class="ml-[4px] w-[23px]">S:</span><div class="w-[30px] h-[19px] bg-[#474747] border border-[#5e5e5e] pl-[3px] leading-[17px]">0</div><span class="ml-[3px]">%</span></div>
            <div class="mt-[3px] h-[19px] flex items-center"><div class="w-[13px] h-[13px] rounded-full border border-[#7a7a7a] bg-[#4c4c4c]"></div><span class="ml-[4px] w-[23px]">B:</span><div class="w-[30px] h-[19px] bg-[#474747] border border-[#5e5e5e] pl-[3px] leading-[17px]">51</div><span class="ml-[3px]">%</span></div>
            <div class="mt-[8px] h-[19px] flex items-center"><div class="w-[13px] h-[13px] rounded-full border border-[#7a7a7a] bg-[#4c4c4c]"></div><span class="ml-[4px] w-[23px]">R:</span><div class="w-[30px] h-[19px] bg-[#474747] border border-[#5e5e5e] pl-[3px] leading-[17px]">130</div></div>
            <div class="mt-[3px] h-[19px] flex items-center"><div class="w-[13px] h-[13px] rounded-full border border-[#7a7a7a] bg-[#4c4c4c]"></div><span class="ml-[4px] w-[23px]">G:</span><div class="w-[30px] h-[19px] bg-[#474747] border border-[#5e5e5e] pl-[3px] leading-[17px]">130</div></div>
            <div class="mt-[3px] h-[19px] flex items-center"><div class="w-[13px] h-[13px] rounded-full border border-[#7a7a7a] bg-[#4c4c4c]"></div><span class="ml-[4px] w-[23px]">B:</span><div class="w-[30px] h-[19px] bg-[#474747] border border-[#5e5e5e] pl-[3px] leading-[17px]">130</div></div>
            <div class="mt-[7px] h-[19px] flex items-center"><span class="ml-[1px] w-[9px]">#</span><div class="w-[70px] h-[19px] bg-[#474747] border border-[#5e5e5e] pl-[2px] leading-[17px]">828282</div></div>
          </div>
          <div class="flex-1 flex flex-col">
            <div class="h-[19px] flex items-center"><div class="w-[13px] h-[13px] rounded-full border border-[#7a7a7a] bg-[#4c4c4c]"></div><span class="ml-[3px] w-[14px]">L:</span><div class="w-[36px] h-[19px] bg-[#474747] border border-[#5e5e5e] pl-[3px] leading-[17px]">54</div></div>
            <div class="mt-[3px] h-[19px] flex items-center"><div class="w-[13px] h-[13px] rounded-full border border-[#7a7a7a] bg-[#4c4c4c]"></div><span class="ml-[3px] w-[14px]">a:</span><div class="w-[36px] h-[19px] bg-[#474747] border border-[#5e5e5e] pl-[3px] leading-[17px]">0</div></div>
            <div class="mt-[3px] h-[19px] flex items-center"><div class="w-[13px] h-[13px] rounded-full border border-[#7a7a7a] bg-[#4c4c4c]"></div><span class="ml-[3px] w-[14px]">b:</span><div class="w-[36px] h-[19px] bg-[#474747] border border-[#5e5e5e] pl-[3px] leading-[17px]">0</div></div>
            <div class="mt-[8px] h-[19px] flex items-center"><span class="w-[26px] text-right">C:</span><div class="ml-[4px] w-[29px] h-[19px] bg-[#474747] border border-[#5e5e5e] pl-[3px] leading-[17px]">51</div><span class="ml-[4px]">%</span></div>
            <div class="mt-[3px] h-[19px] flex items-center"><span class="w-[26px] text-right">M:</span><div class="ml-[4px] w-[29px] h-[19px] bg-[#474747] border border-[#5e5e5e] pl-[3px] leading-[17px]">43</div><span class="ml-[4px]">%</span></div>
            <div class="mt-[3px] h-[19px] flex items-center"><span class="w-[26px] text-right">Y:</span><div class="ml-[4px] w-[29px] h-[19px] bg-[#474747] border border-[#5e5e5e] pl-[3px] leading-[17px]">43</div><span class="ml-[4px]">%</span></div>
            <div class="mt-[3px] h-[19px] flex items-center"><span class="w-[26px] text-right">K:</span><div class="ml-[4px] w-[29px] h-[19px] bg-[#474747] border border-[#5e5e5e] pl-[3px] leading-[17px]">7</div><span class="ml-[4px]">%</span></div>
          </div>
        </div>
      </div>
    </div>
  </div>
</div>
</body>
</html>
